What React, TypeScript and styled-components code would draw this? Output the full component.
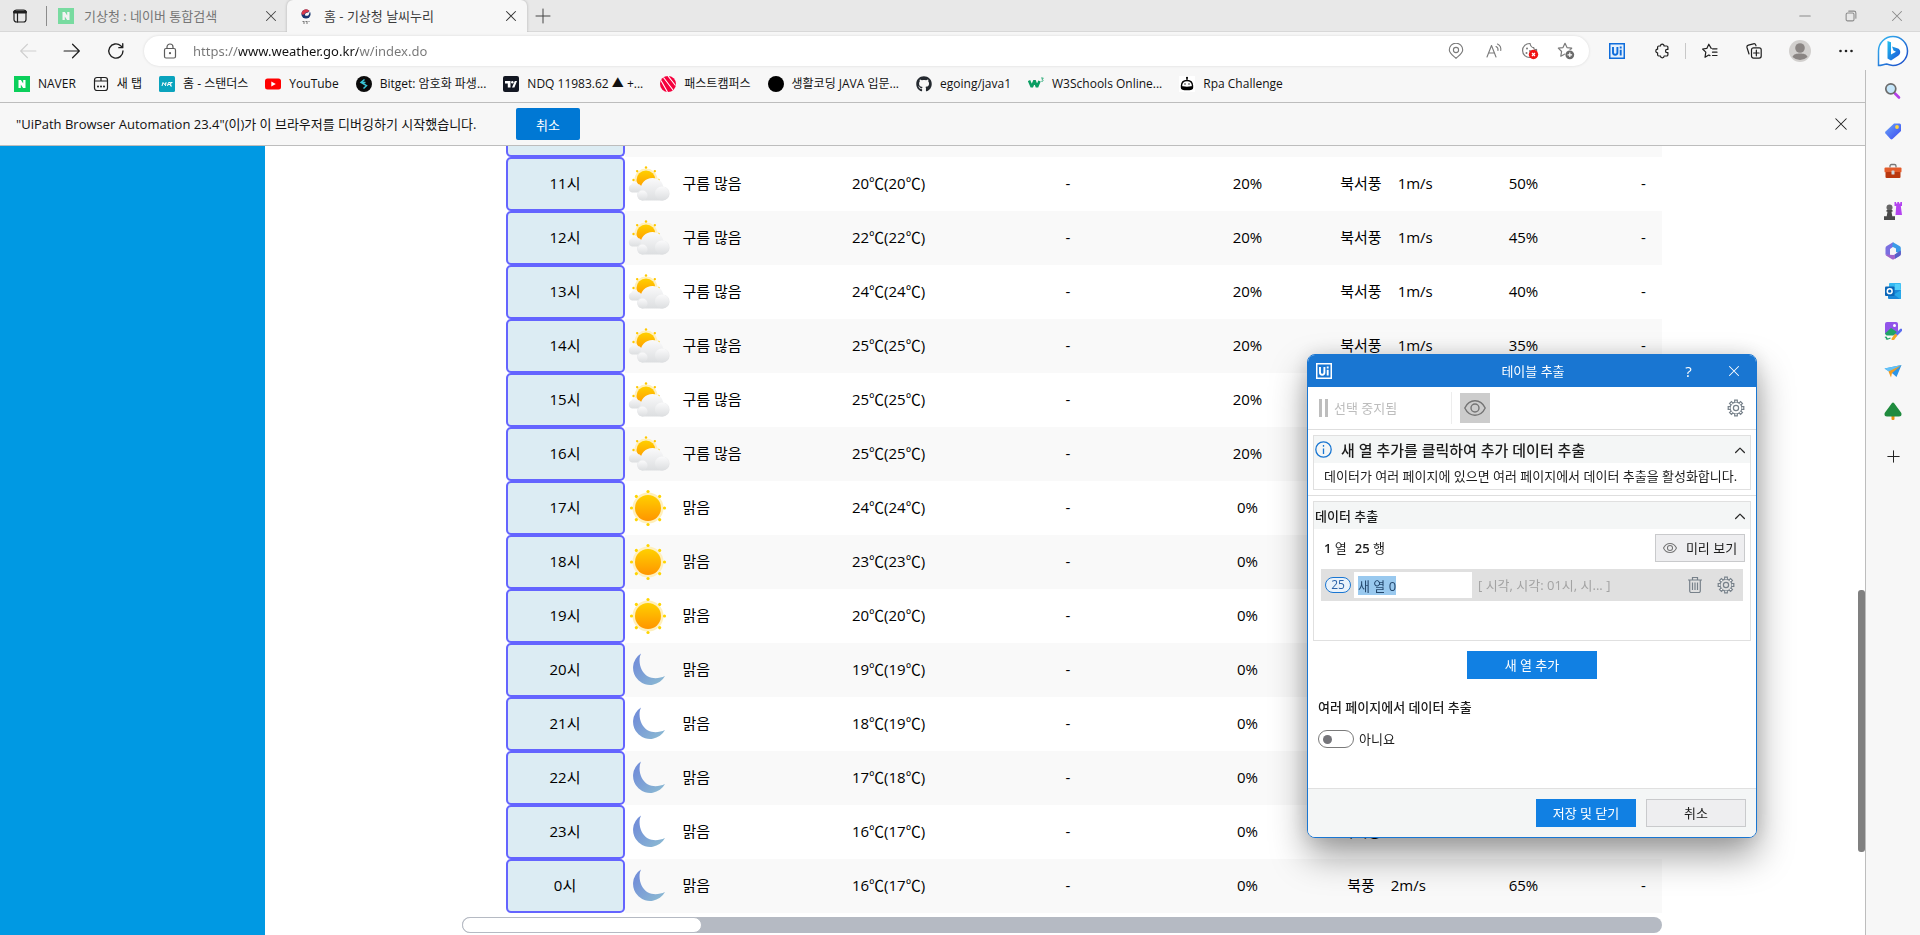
import React, { useEffect, useRef } from "react";
import styled, { createGlobalStyle, css } from "styled-components";
import { FaGithub } from "react-icons/fa";

const UI_FONT = '"Open Sans", "Noto Sans CJK KR", sans-serif';

const GlobalStyle = createGlobalStyle`
  * { box-sizing: border-box; }
  body { margin: 0; font-family: ${UI_FONT}; font-size: 13px; color: #111; background: #fff; }
  button, input { font: inherit; color: inherit; }
  button { border: 0; padding: 0; background: none; display: flex; align-items: center; justify-content: center; }
  a { color: inherit; text-decoration: none; }
  svg { display: block; flex: none; }
`;

/* ---------- window frame ---------- */

const Window = styled.div`
  height: 100vh;
  display: flex;
  flex-direction: column;
  overflow: hidden;
  background: #f7f7f7;
`;

const TabStrip = styled.div`
  display: flex;
  align-items: center;
  height: 32px;
  flex: none;
  background: #e8e8e8;
  border-bottom: 1px solid #d8d8d8;
`;

const StripButton = styled.button<{ $w: number }>`
  width: ${(p) => p.$w}px;
  height: 31px;
`;

const Tab = styled.div<{ $active?: boolean }>`
  display: flex;
  align-items: center;
  width: 240px;
  height: 32px;
  padding: 0 10px 0 11px;
  gap: 10px;
  color: #767676;
  ${(p) =>
    p.$active &&
    css`
      color: #3b3b3b;
      background: #f7f7f7;
      border-radius: 6px 6px 0 0;
      margin-bottom: -1px;
      box-shadow: 0 0 3px rgba(0, 0, 0, 0.25);
      clip-path: inset(-4px -4px 0 -4px);
    `}
`;

const TabTitle = styled.span`
  flex: 1;
  white-space: nowrap;
  line-height: 20px;
`;

const StripDivider = styled.span`
  width: 1px;
  height: 20px;
  background: #8c8c8c;
  margin-left: 7px;
`;

const WindowControls = styled.div`
  display: flex;
  margin-left: auto;
`;

const Toolbar = styled.div`
  display: flex;
  align-items: center;
  height: 38px;
  flex: none;
`;

const ToolButton = styled.button<{ $w: number }>`
  width: ${(p) => p.$w}px;
  height: 30px;
  flex: none;
`;

const NavGroup = styled.div`
  display: flex;
  padding: 0 6px;
`;

const AddressBar = styled.div`
  flex: 1;
  display: flex;
  align-items: center;
  height: 30px;
  border-radius: 15px;
  background: #fff;
  box-shadow: 0 0 3px rgba(0, 0, 0, 0.12);
  padding: 0 5px 0 18px;
`;

const UrlInput = styled.input`
  flex: 1;
  min-width: 0;
  margin-left: 15px;
  padding: 0;
  border: 0;
  outline: 0;
  font-family: "Noto Sans", sans-serif;
  line-height: 20px;
  color: #111;
  background: linear-gradient(90deg, #767676 46px, #111 46px, #111 165px, #767676 165px);
  -webkit-background-clip: text;
  background-clip: text;
  -webkit-text-fill-color: transparent;
`;

const ToolDivider = styled.span`
  width: 1px;
  height: 16px;
  margin-left: 6px;
  background: #c8c8c8;
`;

const Body = styled.div`
  flex: 1;
  min-height: 0;
  display: flex;
`;

const Content = styled.div`
  flex: 1;
  min-width: 0;
  display: flex;
  flex-direction: column;
`;

const Bookmarks = styled.nav`
  display: flex;
  align-items: center;
  height: 33px;
  flex: none;
  padding: 0 0 4px 14px;
  gap: 17px;
  border-bottom: 1px solid #bdbdbd;
  font-size: 12px;
`;

const Bookmark = styled.a`
  display: flex;
  align-items: center;
  gap: 8px;
  white-space: nowrap;
  line-height: 20px;
`;

const InfoBar = styled.div`
  display: flex;
  align-items: center;
  height: 43px;
  flex: none;
  padding: 0 12px 0 16px;
  border-bottom: 1px solid #bdbdbd;
`;

const InfoText = styled.span`
  width: 500px;
  white-space: nowrap;
  line-height: 20px;
`;

const InfoAction = styled.button`
  width: 64px;
  height: 32px;
  border-radius: 2px;
  background: #0078d4;
  color: #fff;
`;

const InfoClose = styled.button`
  margin-left: auto;
  width: 24px;
  height: 24px;
`;

const EdgeSidebar = styled.aside`
  width: 55px;
  flex: none;
  display: flex;
  flex-direction: column;
  align-items: center;
  padding-top: 1px;
  border-left: 1px solid #bdbdbd;
`;

const SideButton = styled.button<{ $last?: boolean }>`
  width: 40px;
  height: ${(p) => (p.$last ? 50 : 40)}px;
`;

/* ---------- weather page ---------- */

const Page = styled.main`
  flex: 1;
  min-height: 0;
  display: flex;
  background: #fff;
  overflow: hidden;
`;

const BlueRail = styled.div`
  width: 265px;
  flex: none;
  background: #0099e3;
`;

const Forecast = styled.section`
  flex: 1;
  min-width: 0;
  display: flex;
  flex-direction: column;
  align-items: center;
`;

const ForecastInner = styled.div`
  width: 100%;
  max-width: 1200px;
`;

const TableWrap = styled.div`
  padding-left: 44px;
  margin-bottom: 4px;
`;

const Table = styled.table`
  width: 100%;
  table-layout: fixed;
  border-collapse: separate;
  border-spacing: 0;
  font-size: 15px;
  line-height: 24px;
  color: #000;
`;

const Row = styled.tr<{ $shade?: boolean }>`
  background: ${(p) => (p.$shade ? "#f9f9f9" : "#fff")};
`;

const HourCell = styled.th`
  height: 54px;
  padding: 0 0 3px;
  font-weight: 400;
  border: 2px solid #6464ff;
  border-radius: 5px;
  background: #dcecf3;
`;

/* lower edge of the row that is scrolled away above */
const PeekHourCell = styled.td`
  height: 11px;
  padding: 0;
  border: 2px solid #6464ff;
  border-top: 0;
  border-radius: 0 0 5px 5px;
  background: #dcecf3;
`;

const Cell = styled.td`
  padding: 0 0 2px;
  text-align: center;
  white-space: nowrap;
`;

const LastCell = styled(Cell)`
  padding-left: 14px;
`;

const Sky = styled.div`
  display: flex;
  align-items: center;
  gap: 12px;
  padding-left: 2px;
`;

const Wind = styled.div`
  display: flex;
  justify-content: center;
  gap: 16px;
`;

const HScroll = styled.div`
  height: 16px;
  border-radius: 8px;
  background: #b5bac3;
`;

const HThumb = styled.div`
  width: 20%;
  height: 16px;
  border: 1px solid #b5bac3;
  border-radius: 8px;
  background: #fff;
`;

const VScroll = styled.div`
  width: 7px;
  flex: none;
  padding-top: 444px;
`;

const VThumb = styled.div`
  height: 262px;
  border-radius: 3px;
  background: #808080;
`;

/* ---------- dialog ---------- */

const Dialog = styled.section`
  position: fixed;
  top: 354px;
  right: 163px;
  width: 450px;
  display: flex;
  flex-direction: column;
  border: 1px solid #1976d2;
  border-radius: 8px;
  overflow: hidden;
  background: #fff;
  color: #1c1c1c;
  font-size: 13px;
  line-height: 20px;
  box-shadow: 0 18px 36px rgba(0, 0, 0, 0.38), 0 0 20px rgba(0, 0, 0, 0.12);
`;

const TitleBar = styled.header`
  display: grid;
  grid-template-columns: 1fr auto 1fr;
  align-items: center;
  height: 32px;
  padding: 0 6px 0 8px;
  background: #1976d2;
  color: #fff;
`;

const TitleText = styled.h1`
  margin: 0;
  font-size: 13px;
  font-weight: 400;
`;

const TitleActions = styled.div`
  display: flex;
  justify-content: flex-end;
`;

const TitleButton = styled.button`
  width: 45px;
  height: 32px;
  padding-left: 12px;
  font-size: 15px;
`;

const DialogTools = styled.div`
  display: flex;
  align-items: center;
  height: 43px;
  padding: 0 11px 0 10px;
  border-bottom: 1px solid #dedede;
`;

const PausedButton = styled.button`
  width: 134px;
  height: 32px;
  justify-content: flex-start;
  gap: 6px;
  border-right: 1px solid #ededed;
  color: #bdbdbd;
`;

const EyeToggle = styled.button`
  width: 30px;
  height: 30px;
  margin-left: 8px;
  background: #cccccc;
`;

const PushButton = styled.button`
  margin-left: auto;
`;

const Panel = styled.section`
  margin: 5px;
  border: 1px solid #e0e0e0;
`;

const PanelHead = styled.div<{ $large?: boolean }>`
  display: flex;
  align-items: center;
  height: 27px;
  padding: 0 5px 0 1px;
  gap: 9px;
  background: #f4f6f6;
  font-size: ${(p) => (p.$large ? 15 : 13)}px;
  font-weight: 500;
`;

const PanelNote = styled.p`
  margin: 0;
  padding: 3px 0 3px 10px;
  white-space: nowrap;
`;

const Rule = styled.div`
  height: 1px;
  background: #dedede;
`;

const DataBody = styled.div`
  height: 111px;
  padding: 5px 5px 0 7px;
`;

const CountLine = styled.div`
  display: flex;
  align-items: center;
  height: 28px;
  padding-left: 3px;
  gap: 8px;
`;

const Count = styled.b`
  font-weight: 600;
`;

const PreviewButton = styled.button`
  width: 90px;
  height: 28px;
  margin-left: auto;
  gap: 9px;
  border: 1px solid #c9cacc;
  background: #eeeef0;
`;

const ColumnRow = styled.div`
  display: flex;
  align-items: center;
  height: 32px;
  margin: 7px 2px 0 0;
  padding: 0 8px 0 4px;
  background: #e0e0e0;
`;

const CountPill = styled.span`
  width: 26px;
  height: 16px;
  border: 1px solid #1976d2;
  border-radius: 8px;
  background: #e9f2fb;
  color: #2a62a8;
  font-size: 12px;
  line-height: 14px;
  text-align: center;
`;

const NameInput = styled.input`
  width: 118px;
  height: 26px;
  margin-left: 3px;
  padding: 0 4px;
  border: 0;
  outline: 0;
  background: #fff;
  line-height: 16px;
  &::selection { background: #99c9ef; color: #24486e; }
`;

const Sample = styled.span`
  flex: 1;
  padding-left: 6px;
  color: #a3a3a3;
  white-space: nowrap;
`;

const RowTools = styled.div`
  display: flex;
  gap: 14px;
`;

const PrimaryButton = styled.button<{ $w: number }>`
  width: ${(p) => p.$w}px;
  height: 28px;
  background: #1180e3;
  color: #fff;
`;

const SecondaryButton = styled.button`
  width: 100px;
  height: 28px;
  border: 1px solid #c9cacc;
  background: #eeeef0;
`;

const Centered = styled.div`
  display: flex;
  justify-content: center;
  padding-top: 5px;
`;

const Paging = styled.div`
  padding: 18px 10px 39px;
`;

const PagingTitle = styled.h2`
  margin: 0 0 12px;
  font-size: 13px;
  font-weight: 500;
`;

const SwitchLabel = styled.label`
  display: flex;
  align-items: center;
  gap: 5px;
`;

const Switch = styled.input`
  appearance: none;
  display: flex;
  align-items: center;
  width: 36px;
  height: 18px;
  margin: 0;
  padding: 0 4px;
  border: 1px solid #7a7a7a;
  border-radius: 9px;
  &::before { content: ""; width: 9px; height: 9px; border-radius: 50%; background: #75757a; }
`;

const DialogFoot = styled.footer`
  display: flex;
  justify-content: flex-end;
  gap: 10px;
  padding: 10px;
  border-top: 1px solid #e0e0e0;
  background: #f4f6f6;
`;

/* ---------- icons ---------- */

type IconProps = { size?: number; color?: string; w?: number; children?: React.ReactNode };

const Line = ({ size = 16, color = "#1f1f1f", w = 1.2, children }: IconProps) => (
  <svg width={size} height={size} viewBox="0 0 16 16" fill="none" stroke={color} strokeWidth={w} strokeLinecap="round" strokeLinejoin="round" aria-hidden="true">
    {children}
  </svg>
);

const CloseIcon = (p: IconProps) => <Line {...p}><path d="M2 2l12 12M14 2L2 14" /></Line>;
const PlusIcon = (p: IconProps) => <Line {...p}><path d="M8 1v14M1 8h14" /></Line>;
const ChevronUp = () => <Line size={10} w={2} color="#2b2b2b"><path d="M1 12l7-7 7 7" /></Line>;

const WorkspaceIcon = () => (
  <Line><rect x="2" y="2" width="12" height="12" rx="2.5" /><path d="M2.5 4h11" strokeWidth="3" /><path d="M5.5 5v9" /></Line>
);
const NaverIcon = ({ faded }: { faded?: boolean }) => (
  <svg width="16" height="16" viewBox="0 0 16 16" opacity={faded ? 0.5 : 1} aria-hidden="true">
    <rect width="16" height="16" fill="#0bcf5b" />
    <path d="M4.5 4h2.4l2.3 3.5V4h2.3v8H9.1L6.8 8.5V12H4.5z" fill="#fff" />
  </svg>
);
const KmaIcon = () => (
  <svg width="16" height="16" viewBox="0 0 16 16" aria-hidden="true">
    <circle cx="8" cy="6" r="4.600" fill="#17356f" />
    <path d="M3.500 5A4.600 4.600 0 0 1 11.500 3c-1 .5-1.500 1.500-3 1.500S6.500 7 5 6.800 3.500 5 3.500 5z" fill="#d8384a" />
    <path d="M12.800 2.500c-1.800.2-1.600 2-3.300 2.200S6.800 5.800 7 7.200c1 1 3.500.8 4-1 .3-1.400 1-2.300 1.800-3.700z" fill="#f7f7f7" />
    <path d="M4.500 13.500h7M5 15h6" stroke="#777" strokeWidth="1" strokeDasharray="2 1" />
  </svg>
);
const MinimizeIcon = () => <Line size={12} color="#8a8a8a" w={1.4}><path d="M1 8h14" /></Line>;
const RestoreIcon = () => (
  <Line size={12} color="#8a8a8a" w={1.4}><rect x="1.500" y="4" width="10.500" height="10.500" rx="2" /><path d="M5 1.500h7a2.500 2.500 0 0 1 2.500 2.500v7" /></Line>
);
const BackIcon = () => <Line size={18} color="#cfcfcf" w={1}><path d="M15 8H1.500M7.500 2l-6 6 6 6" /></Line>;
const ForwardIcon = () => <Line size={18} w={1.100}><path d="M1 8h13.500M8.500 2l6 6-6 6" /></Line>;
const ReloadIcon = () => <Line size={18}><path d="M14.200 8a6.300 6.300 0 1 1-2-4.600L14 5M14 1.500V5h-3.500" /></Line>;
const LockIcon = () => (
  <Line color="#5c5c5c"><rect x="2.500" y="5.500" width="11" height="9.500" rx="1.500" /><path d="M5 5.500V4a3 3 0 0 1 6 0v1.500" /><circle cx="8" cy="10.200" r=".5" fill="#5c5c5c" /></Line>
);
const PinIcon = () => (
  <Line color="#7a7a7a" w={1.100}><path d="M8 15.400C5 12.600 1.300 10 1.300 6.900a6.700 6.700 0 0 1 13.400 0c0 3.100-3.700 5.700-6.700 8.500z" /><circle cx="8" cy="7" r="2.600" /></Line>
);
const ReadAloudIcon = () => (
  <Line color="#7a7a7a" w={1.100}><path d="M1 14L5.500 2.500 10 14M2.600 10h5.800M10 3.500c1.600.8 2.200 2.500 2 4M11.500 1c2.600 1.200 3.600 3.900 3.300 6.500" /></Line>
);
const CookieIcon = () => (
  <svg width="18" height="18" viewBox="0 0 18 18" fill="none" aria-hidden="true">
    <path d="M9 1.500A7 7 0 1 0 15.500 7.500c-1.500.4-2.700-.3-2.800-1.800C10.500 5.500 9.500 4 9 1.500z" stroke="#7a7a7a" strokeWidth="1.200" />
    <g fill="#7a7a7a"><circle cx="6" cy="6.500" r="1" /><circle cx="5.500" cy="11" r="1" /><circle cx="9" cy="9" r="1" /></g>
    <circle cx="12.500" cy="12.500" r="4.700" fill="#f01414" />
    <path d="M11 11l3 3M14 11l-3 3" stroke="#fff" strokeWidth="1.200" />
  </svg>
);
const STAR = "M8 1.300l2 4.300 4.700.6-3.400 3.300.8 4.700L8 12l-4.200 2.200.8-4.700L1.300 6.200 6 5.600z";
const StarAddIcon = () => (
  <svg width="18" height="18" viewBox="0 0 18 18" fill="none" aria-hidden="true">
    <path d={STAR} stroke="#7a7a7a" strokeWidth="1.200" strokeLinejoin="round" />
    <circle cx="12.800" cy="12.800" r="5" fill="#fff" /><circle cx="12.800" cy="12.800" r="4.400" fill="#6b6b6b" />
    <path d="M12.800 10.500v4.600M10.500 12.800h4.600" stroke="#fff" strokeWidth="1.200" />
  </svg>
);
const UiLogo = ({ light }: { light?: boolean }) => (
  <svg width="16" height="16" viewBox="0 0 16 16" fill="none" aria-hidden="true">
    <rect x=".75" y=".75" width="14.500" height="14.500" fill={light ? "#1976d2" : "#e3effc"} stroke={light ? "#fff" : "#0f6ddb"} strokeWidth="1.500" />
    <path d="M4 4v5.500a2.200 2.200 0 0 0 4.400 0V4M11.700 6.800v5.700M11.700 3.500v2" stroke={light ? "#fff" : "#0f6ddb"} strokeWidth="1.900" />
  </svg>
);
const PuzzleIcon = () => (
  <Line><path d="M4.800 3h1.700a1.800 1.800 0 0 1 3.600 0h2.600a1.200 1.200 0 0 1 1.200 1.200v2.200h-.8a1.600 1.600 0 0 0 0 3.200h.8v2.200a1.200 1.200 0 0 1-1.200 1.200h-2.600a1.800 1.800 0 0 1-3.600 0H4.800a1.200 1.200 0 0 1-1.200-1.200V9.800a1.800 1.800 0 0 1 0-3.600v-2A1.200 1.200 0 0 1 4.800 3z" /></Line>
);
const FavoritesIcon = () => (
  <Line><path d="M10.500 5.800H15M10.500 9.200H15M10.500 12.500H15" /><path d="M9.200 5.400L6.800 1.200l-2 4.200-4.200.6 3.200 3.100-.8 5.200 3.800-2.300 1.200.6" /></Line>
);
const CollectionsIcon = () => (
  <Line><rect x="5.500" y="4.800" width="9.700" height="10.300" rx="2" /><path d="M10.350 7.200v5.600M7.600 10h5.500" /><path d="M3 11L1 4.500a2 2 0 0 1 1.400-2.400l5-1.300a2 2 0 0 1 2.400 1.300l.2.700" /></Line>
);
const Avatar = () => (
  <svg width="22" height="22" viewBox="0 0 22 22" aria-hidden="true">
    <circle cx="11" cy="11" r="11" fill="#d2d0ce" /><circle cx="11" cy="8" r="4.800" fill="#8a8583" />
    <path d="M3.500 17c1-3 4-3.500 7.500-3.500s6.500.5 7.500 3.500a11 11 0 0 1-15 0z" fill="#8a8583" />
  </svg>
);
const DotsIcon = () => (
  <svg width="16" height="16" viewBox="0 0 16 16" fill="#222" aria-hidden="true"><circle cx="2.500" cy="8" r="1.300" /><circle cx="8" cy="8" r="1.300" /><circle cx="13.500" cy="8" r="1.300" /></svg>
);
const BingIcon = () => (
  <svg width="32" height="32" viewBox="0 0 32 32" aria-hidden="true">
    <defs>
      <linearGradient id="bingRing" x1="0" y1="0" x2="1" y2="1"><stop offset="0" stopColor="#35b9f2" /><stop offset="1" stopColor="#1b48c7" /></linearGradient>
      <linearGradient id="bingB" x1="0" y1="0" x2="1" y2="1"><stop offset="0" stopColor="#22c3ee" /><stop offset="1" stopColor="#1d50d8" /></linearGradient>
    </defs>
    <path d="M1.500 30.500V16A14.500 14.500 0 1 1 16 30.500c-2.500 0-4.600-.8-6.500-1.500-2.500.2-5 1.500-8 1.500z" fill="#fff" stroke="url(#bingRing)" strokeWidth="1.500" />
    <path d="M10.500 6l3.500 1.300v12.200l5-2.800-2.500-1.300-1.500-3.900 6 2.100c1.400.6 2.200 1.900 2.200 3.500 0 1.700-.8 2.900-2 3.600L14 25.500l-3.500-2z" fill="url(#bingB)" />
  </svg>
);

const NewTabIcon = () => (
  <Line><rect x="1.500" y="1.500" width="13" height="13" rx="2.500" /><path d="M2 5h12M8 2v2.500" /><path d="M5 10.500h.01M8 10.500h.01M11 10.500h.01" strokeWidth="2" /></Line>
);
const StandersIcon = () => (
  <svg width="16" height="16" viewBox="0 0 16 16" aria-hidden="true"><rect width="16" height="16" rx="1.500" fill="#0aa3bd" /><path d="M3 10l1-3.500 1.500 2L7 6.500 6.500 10M8.500 10l1-3.500h2l-.5 2h-2M13.500 6.500h-1.500L11.500 10h1.500" stroke="#fff" strokeWidth="1" fill="none" /></svg>
);
const YouTubeIcon = () => (
  <svg width="16" height="16" viewBox="0 0 16 16" aria-hidden="true"><rect y="2.500" width="16" height="11" rx="2.500" fill="#f00" /><path d="M6.300 5.500v5L10.800 8z" fill="#fff" /></svg>
);
const BitgetIcon = () => (
  <svg width="16" height="16" viewBox="0 0 16 16" aria-hidden="true"><circle cx="8" cy="8" r="8" fill="#0b0b0b" /><path d="M8.500 3.500L5 6.500l5.500 3.200L7.500 12.500M5.500 6.500h4" stroke="#39c5d6" strokeWidth="1.500" fill="none" /></svg>
);
const TradingViewIcon = () => (
  <svg width="16" height="16" viewBox="0 0 16 16" aria-hidden="true"><rect width="16" height="16" rx="2" fill="#131722" /><path d="M2 5h5.500v6.500H4.800V7.500H2zM11.800 5H14l-2.600 6.500H9z" fill="#fff" /><circle cx="9.300" cy="6.200" r="1.200" fill="#fff" /></svg>
);
const FastCampusIcon = () => (
  <svg width="16" height="16" viewBox="0 0 16 16" aria-hidden="true"><circle cx="8" cy="8" r="8" fill="#f5003d" /><path d="M1 4.500L7.500 16M3.500 1.500L13 14M8 0l7.500 9.500" stroke="#fff" strokeWidth="1.100" /></svg>
);
const BlackDot = () => <svg width="16" height="16" viewBox="0 0 16 16" aria-hidden="true"><circle cx="8" cy="8" r="8" /></svg>;
const W3Icon = () => (
  <svg width="16" height="16" viewBox="0 0 16 16" fill="none" stroke="#0a9e63" aria-hidden="true"><path d="M1 4.500l2.800 6.500 2.700-6.500L9 11l2.500-6" strokeWidth="2.600" strokeLinejoin="bevel" /><path d="M13 2h2.300l-1.200 1.500c1.600.2 1.300 2.300-.8 1.800" strokeWidth=".8" /></svg>
);
const RobotIcon = () => (
  <svg width="16" height="16" viewBox="0 0 16 16" fill="none" stroke="#000" aria-hidden="true">
    <rect width="16" height="16" fill="#fff" stroke="none" /><path d="M8 1.500V4M2.500 10c0-3.500 2-5.500 5.500-5.500s5.500 2 5.500 5.500" strokeWidth="1.300" /><path d="M1.800 9.500c1 1.500 11.400 1.500 12.400 0v2c0 1.800-1.700 2.700-3.700 2.700h-5c-2 0-3.700-.9-3.700-2.700z" fill="#000" stroke="none" /><circle cx="8" cy="1.800" r="1" fill="#000" stroke="none" /><circle cx="6" cy="8" r=".7" fill="#000" stroke="none" /><circle cx="10" cy="8" r=".7" fill="#000" stroke="none" />
  </svg>
);

const Side = ({ children }: { children: React.ReactNode }) => (
  <svg width="18" height="18" viewBox="0 0 18 18" aria-hidden="true">{children}</svg>
);
const SearchSide = () => (
  <Side><path d="M11 11.500l4 4" stroke="#b33fe8" strokeWidth="2.600" strokeLinecap="round" /><circle cx="6.800" cy="6.800" r="5" fill="#c5e6fa" stroke="#6c6c6c" strokeWidth="1.700" /></Side>
);
const TagSide = () => (
  <Side>
    <defs><linearGradient id="tagG" x1="0" y1="0" x2="1" y2="1"><stop offset="0" stopColor="#6aa5f8" /><stop offset="1" stopColor="#3b48f0" /></linearGradient></defs>
    <path d="M10 1.500h5.500a1.500 1.500 0 0 1 1.500 1.500v6L8.500 17a1.500 1.500 0 0 1-2 0L1.500 11.500a1.500 1.500 0 0 1 0-2z" fill="url(#tagG)" /><circle cx="13" cy="5" r="1.900" fill="#ffd43d" />
  </Side>
);
const ToolboxSide = () => (
  <Side>
    <path d="M6 5.500V4a1.500 1.500 0 0 1 1.500-1.500h3A1.500 1.500 0 0 1 12 4v1.500" fill="none" stroke="#777" strokeWidth="1.300" />
    <rect x=".5" y="5.500" width="17" height="5" rx="1" fill="#e35b2a" /><rect x="1.500" y="10" width="15" height="6" rx="1" fill="#b9380f" /><rect x="7.500" y="8.500" width="3" height="4" rx=".6" fill="#cfd6dc" />
  </Side>
);
const GamesSide = () => (
  <Side>
    <path d="M10.500 0h1.600v1.500h1.200V0h1.800v1.500h1.200V0H18v4h-1.200l1.200 9h-6.500l.7-9h-1.700z" fill="#b443f0" />
    <circle cx="5.500" cy="5.500" r="3" fill="#666" /><path d="M2.500 8h6v1.800H7.500l.8 4.400H11V18H0v-3.800h2.700l.8-4.400h-1z" fill="#4a4a4a" />
  </Side>
);
const OfficeSide = () => (
  <Side>
    <path d="M9 .3l-6.200 3.600A2.500 2.500 0 0 0 1.500 6v6.500l4.500 1.200V7l5-3.500z" fill="#7b6fe0" />
    <path d="M9 .3l6.500 3.600A2.500 2.500 0 0 1 16.800 6v6L12 10V6.500L8 4.500z" fill="#3b9be8" />
    <path d="M1.500 12.500c.2.800.7 1.200 1.300 1.600L8 17.300a2.300 2.300 0 0 0 2 0l5.500-3.200a2.500 2.500 0 0 0 1.300-2.100l-.3-2L9.500 13z" fill="#a066cc" />
    <path d="M16.800 8.500L11 12.300v4.400l4.500-2.600a2.500 2.500 0 0 0 1.300-2.100z" fill="#5561c8" />
    <path d="M9 5.800l3 1.700v3.300l-3 1.800-3-1.800V7.500z" fill="#f7f7f7" />
  </Side>
);
const OutlookSide = () => (
  <Side>
    <rect x="5" y="1" width="12" height="7" rx="1" fill="#35b8f1" /><rect x="11" y="2" width="5.500" height="6" fill="#54d0fb" /><path d="M4 8h13v8a1 1 0 0 1-1 1H5a1 1 0 0 1-1-1z" fill="#1a87d8" /><path d="M17 8l-7 4.500L16 17a1 1 0 0 0 1-1z" fill="#28a8ea" />
    <rect x="1" y="4.500" width="9.500" height="9.500" rx="1" fill="#0a66b8" /><circle cx="5.700" cy="9.200" r="2.400" fill="none" stroke="#fff" strokeWidth="1.500" />
  </Side>
);
const DesignerSide = () => (
  <Side>
    <rect x="1" y="0" width="13" height="13" rx="2" fill="#9254ea" /><circle cx="10.500" cy="3.500" r="1.500" fill="#fff" /><path d="M1 11.500l6-5.500 6 4-3.500 3.500H2.500z" fill="#21a366" />
    <path d="M17 8l-5.500 5.500" stroke="#5b6cf0" strokeWidth="2.600" strokeLinecap="round" /><path d="M11.500 13.500L9 17" stroke="#f5a623" strokeWidth="3" strokeLinecap="round" /><path d="M1 15.500c1-1 2 0 1.500 1s1.500.5 4-.500" stroke="#21a366" strokeWidth="1.300" fill="none" />
  </Side>
);
const PlaneSide = () => (
  <Side><path d="M.5 6.500L17.500 3l-5 12-3.700-3.200z" fill="#2b95e8" /><path d="M.5 6.500L17.500 3 5.500 10z" fill="#62c2f7" /><path d="M4.500 9.500L17 3.500l-9 7.500L7 15.500z" fill="#f39c1f" /></Side>
);
const TreeSide = () => (
  <Side><rect x="7.500" y="13" width="3" height="5" rx="1" fill="#e8920c" /><path d="M9 .5c.4 0 .8.300 1 .600L17 10.500c1.200 2 .2 4-2 4H3c-2.200 0-3.200-2-2-4L8 1.100c.2-.3.6-.6 1-.6z" fill="#1f8b3e" /></Side>
);

const EyeIcon = ({ size = 22, w = 1.4 }: { size?: number; w?: number }) => (
  <svg width={size} height={size} viewBox="0 0 22 22" fill="none" stroke="#747474" strokeWidth={w} aria-hidden="true"><path d="M.8 11c4.600-9.600 15.800-9.600 20.400 0-4.600 9.600-15.800 9.600-20.400 0z" /><circle cx="11" cy="11" r="4" /></svg>
);
const GEAR = Array.from({ length: 8 }, (_, i) => i * 45);
const GearIcon = () => (
  <svg width="18" height="18" viewBox="0 0 18 18" fill="none" stroke="#77818a" strokeWidth="1.200" aria-hidden="true">
    <circle cx="9" cy="9" r="5.900" /><circle cx="9" cy="9" r="2.600" />
    {GEAR.map((a) => <path key={a} d="M7.700 3.200V1.200h2.600v2" fill="#fff" transform={`rotate(${a} 9 9)`} />)}
  </svg>
);
const TrashIcon = () => (
  <svg width="16" height="18" viewBox="0 0 16 18" fill="none" stroke="#77818a" strokeWidth="1.200" aria-hidden="true"><path d="M1 4h14M5.500 4V1.500h5V4M2.700 4v11a1.500 1.500 0 0 0 1.500 1.500h7.600a1.500 1.500 0 0 0 1.500-1.500V4M5.500 6.500V14M8 6.500V14M10.500 6.500V14" /></svg>
);
const PauseIcon = () => <svg width="10" height="18" viewBox="0 0 10 18" fill="#bdbdbd" aria-hidden="true"><rect x="1" width="3" height="18" /><rect x="7" width="3" height="18" /></svg>;
const InfoIcon = () => (
  <svg width="17" height="17" viewBox="0 0 17 17" fill="none" stroke="#1976d2" aria-hidden="true"><circle cx="8.500" cy="8.500" r="7.700" strokeWidth="1.300" /><path d="M8.500 7.500V13M8.500 4v1.700" strokeWidth="1.300" /></svg>
);

const HiddenDefs = styled.svg`
  position: absolute;
`;

const SkyGradients = () => (
  <HiddenDefs width="0" height="0" aria-hidden="true">
    <defs>
      <linearGradient id="sunG" x1="0" y1="0" x2="0" y2="1"><stop offset="0" stopColor="#ffd000" /><stop offset="1" stopColor="#ff9500" /></linearGradient>
      <linearGradient id="cloudG" x1="0" y1="0" x2="0" y2="1"><stop offset="0" stopColor="#fafafb" /><stop offset="1" stopColor="#dcdee0" /></linearGradient>
      <linearGradient id="moonG" x1="0" y1="0" x2="1" y2="1"><stop offset="0.200" stopColor="#7390d8" /><stop offset="1" stopColor="#8dbdd2" /></linearGradient>
    </defs>
  </HiddenDefs>
);

const RAYS = Array.from({ length: 8 }, (_, i) => i * 45);

const SunIcon = () => (
  <svg width="44" height="44" viewBox="0 0 44 44" aria-hidden="true">
    <circle cx="21" cy="23" r="15.500" fill="#fff0bd" /><circle cx="21" cy="23" r="13" fill="url(#sunG)" />
    {RAYS.map((a) => <circle key={a} cx="21" cy="6.500" r="1.600" fill="#ffd500" transform={`rotate(${a} 21 23)`} />)}
  </svg>
);
const MoonIcon = () => (
  <svg width="44" height="44" viewBox="0 0 44 44" aria-hidden="true">
    <path d="M14 6.500C10.500 14 13.500 25 21 29.500c5 2.500 11.500 2 17-.5A17 17 0 1 1 14 6.500z" fill="url(#moonG)" />
  </svg>
);
const CloudyIcon = () => (
  <svg width="44" height="44" viewBox="0 0 44 44" aria-hidden="true">
    <circle cx="19" cy="19" r="11.500" fill="#fff0bd" /><circle cx="19" cy="19" r="9.500" fill="url(#sunG)" />
    {RAYS.map((a) => <circle key={a} cx="19" cy="6.500" r="1.200" fill="#ffc800" transform={`rotate(${a} 19 19)`} />)}
    <path d="M5 31.500a4.200 4.200 0 0 1-.5-8c1-3.500 5.500-3.500 6.500-.5 5 .5 5 8.500 0 8.500z" fill="url(#cloudG)" />
    <path d="M15.500 39.500a5.500 5.500 0 0 1-2-10.500c0-7 5-12 12-12 6 0 10 3.500 10.700 8.500a7 7 0 0 1-1.200 14z" fill="url(#cloudG)" />
    <circle cx="15.500" cy="34.500" r="5" fill="url(#cloudG)" /><circle cx="35" cy="32.500" r="7" fill="url(#cloudG)" />
  </svg>
);

/* ---------- data ---------- */

type SkyKind = "구름 많음" | "맑음";
type Hour = { h: number; sky: SkyKind; t: string; rain: string; dir: string; speed: string; hum: string };

const hour = (h: number, sky: SkyKind, a: number, b: number, rain: string, hum: string, dir = "북서풍", speed = "1m/s"): Hour => ({
  h, sky, t: `${a}℃(${b}℃)`, rain, dir, speed, hum,
});

const HOURS: Hour[] = [
  hour(11, "구름 많음", 20, 20, "20%", "50%"),
  hour(12, "구름 많음", 22, 22, "20%", "45%"),
  hour(13, "구름 많음", 24, 24, "20%", "40%"),
  hour(14, "구름 많음", 25, 25, "20%", "35%"),
  hour(15, "구름 많음", 25, 25, "20%", "35%"),
  hour(16, "구름 많음", 25, 25, "20%", "35%"),
  hour(17, "맑음", 24, 24, "0%", "40%"),
  hour(18, "맑음", 23, 23, "0%", "40%"),
  hour(19, "맑음", 20, 20, "0%", "50%"),
  hour(20, "맑음", 19, 19, "0%", "55%"),
  hour(21, "맑음", 18, 19, "0%", "55%"),
  hour(22, "맑음", 17, 18, "0%", "60%"),
  hour(23, "맑음", 16, 17, "0%", "60%"),
  hour(0, "맑음", 16, 17, "0%", "65%", "북풍", "2m/s"),
];

const skyIcon = (row: Hour) => {
  if (row.sky === "구름 많음") return <CloudyIcon />;
  return row.h >= 20 || row.h === 0 ? <MoonIcon /> : <SunIcon />;
};

const BOOKMARKS: [string, React.ReactNode][] = [
  ["NAVER", <NaverIcon />],
  ["새 탭", <NewTabIcon />],
  ["홈 - 스탠더스", <StandersIcon />],
  ["YouTube", <YouTubeIcon />],
  ["Bitget: 암호화 파생...", <BitgetIcon />],
  ["NDQ 11983.62 ▲ +...", <TradingViewIcon />],
  ["패스트캠퍼스", <FastCampusIcon />],
  ["생활코딩 JAVA 입문...", <BlackDot />],
  ["egoing/java1", <FaGithub size={16} color="#24292f" />],
  ["W3Schools Online...", <W3Icon />],
  ["Rpa Challenge", <RobotIcon />],
];

const SIDE: [string, React.ReactNode][] = [
  ["검색", <SearchSide />],
  ["쇼핑", <TagSide />],
  ["도구", <ToolboxSide />],
  ["게임", <GamesSide />],
  ["Microsoft 365", <OfficeSide />],
  ["Outlook", <OutlookSide />],
  ["Designer", <DesignerSide />],
  ["Drop", <PlaneSide />],
  ["E-tree", <TreeSide />],
];

/* ---------- views ---------- */

const WeatherTable = () => (
  <Table>
    <colgroup>
      <col width="119" /><col width="174" /><col width="180" /><col width="179" />
      <col width="180" /><col width="98" /><col width="176" /><col width="50" />
    </colgroup>
    <tbody>
      <Row $shade>
        <PeekHourCell />
        <td colSpan={7} />
      </Row>
      {HOURS.map((r, i) => (
        <Row key={r.h} $shade={i % 2 === 1}>
          <HourCell scope="row">{r.h}시</HourCell>
          <Cell><Sky>{skyIcon(r)}{r.sky}</Sky></Cell>
          <Cell>{r.t}</Cell>
          <Cell>-</Cell>
          <Cell>{r.rain}</Cell>
          <Cell><Wind><span>{r.dir}</span><span>{r.speed}</span></Wind></Cell>
          <Cell>{r.hum}</Cell>
          <LastCell>-</LastCell>
        </Row>
      ))}
    </tbody>
  </Table>
);

const ExtractDialog = () => {
  const nameRef = useRef<HTMLInputElement>(null);
  useEffect(() => {
    nameRef.current?.focus();
    nameRef.current?.select();
  }, []);
  return (
    <Dialog role="dialog" aria-labelledby="dlg-title">
      <TitleBar>
        <UiLogo light />
        <TitleText id="dlg-title">테이블 추출</TitleText>
        <TitleActions>
          <TitleButton aria-label="도움말">?</TitleButton>
          <TitleButton aria-label="닫기"><CloseIcon size={12} color="#fff" w={1.4} /></TitleButton>
        </TitleActions>
      </TitleBar>
      <DialogTools>
        <PausedButton disabled><PauseIcon />선택 중지됨</PausedButton>
        <EyeToggle aria-label="강조 표시" aria-pressed="true"><EyeIcon /></EyeToggle>
        <PushButton aria-label="설정"><GearIcon /></PushButton>
      </DialogTools>
      <Panel>
        <PanelHead $large>
          <InfoIcon />
          <span>새 열 추가를 클릭하여 추가 데이터 추출</span>
          <PushButton aria-label="접기"><ChevronUp /></PushButton>
        </PanelHead>
        <PanelNote>데이터가 여러 페이지에 있으면 여러 페이지에서 데이터 추출을 활성화합니다.</PanelNote>
      </Panel>
      <Rule />
      <Panel>
        <PanelHead>
          <span>데이터 추출</span>
          <PushButton aria-label="접기"><ChevronUp /></PushButton>
        </PanelHead>
        <DataBody>
          <CountLine>
            <span><Count>1</Count> 열</span>
            <span><Count>25</Count> 행</span>
            <PreviewButton><EyeIcon size={14} w={1.6} />미리 보기</PreviewButton>
          </CountLine>
          <ColumnRow>
            <CountPill>25</CountPill>
            <NameInput ref={nameRef} defaultValue="새 열 0" aria-label="열 이름" />
            <Sample>[ 시각, 시각: 01시, 시... ]</Sample>
            <RowTools>
              <button aria-label="삭제"><TrashIcon /></button>
              <button aria-label="열 설정"><GearIcon /></button>
            </RowTools>
          </ColumnRow>
        </DataBody>
      </Panel>
      <Centered><PrimaryButton $w={130}>새 열 추가</PrimaryButton></Centered>
      <Paging>
        <PagingTitle>여러 페이지에서 데이터 추출</PagingTitle>
        <SwitchLabel><Switch type="checkbox" role="switch" />아니요</SwitchLabel>
      </Paging>
      <DialogFoot>
        <PrimaryButton $w={100}>저장 및 닫기</PrimaryButton>
        <SecondaryButton>취소</SecondaryButton>
      </DialogFoot>
    </Dialog>
  );
};

export default function App() {
  return (
    <Window>
      <GlobalStyle />
      <SkyGradients />
      <TabStrip>
        <StripButton $w={39} aria-label="작업 영역"><WorkspaceIcon /></StripButton>
        <StripDivider />
        <Tab>
          <NaverIcon faded />
          <TabTitle>기상청 : 네이버 통합검색</TabTitle>
          <button aria-label="탭 닫기"><CloseIcon size={12} color="#444" w={1.4} /></button>
        </Tab>
        <Tab $active>
          <KmaIcon />
          <TabTitle>홈 - 기상청 날씨누리</TabTitle>
          <button aria-label="탭 닫기"><CloseIcon size={12} color="#333" w={1.4} /></button>
        </Tab>
        <StripButton $w={32} aria-label="새 탭"><PlusIcon size={16} color="#444" w={1} /></StripButton>
        <WindowControls>
          <StripButton $w={46} aria-label="최소화"><MinimizeIcon /></StripButton>
          <StripButton $w={46} aria-label="이전 크기로"><RestoreIcon /></StripButton>
          <StripButton $w={46} aria-label="닫기"><CloseIcon size={12} color="#8a8a8a" w={1.4} /></StripButton>
        </WindowControls>
      </TabStrip>

      <Toolbar>
        <NavGroup>
          <ToolButton $w={44} aria-label="뒤로"><BackIcon /></ToolButton>
          <ToolButton $w={44} aria-label="앞으로"><ForwardIcon /></ToolButton>
          <ToolButton $w={44} aria-label="새로 고침"><ReloadIcon /></ToolButton>
        </NavGroup>
        <AddressBar>
          <LockIcon />
          <UrlInput aria-label="주소" defaultValue="https://www.weather.go.kr/w/index.do" />
          <ToolButton $w={40} aria-label="위치"><PinIcon /></ToolButton>
          <ToolButton $w={36} aria-label="소리내어 읽기"><ReadAloudIcon /></ToolButton>
          <ToolButton $w={36} aria-label="쿠키 차단됨"><CookieIcon /></ToolButton>
          <ToolButton $w={36} aria-label="즐겨찾기에 추가"><StarAddIcon /></ToolButton>
        </AddressBar>
        <ToolButton $w={56} aria-label="UiPath"><UiLogo /></ToolButton>
        <ToolButton $w={34} aria-label="확장"><PuzzleIcon /></ToolButton>
        <ToolDivider />
        <ToolButton $w={48} aria-label="즐겨찾기"><FavoritesIcon /></ToolButton>
        <ToolButton $w={40} aria-label="컬렉션"><CollectionsIcon /></ToolButton>
        <ToolButton $w={52} aria-label="프로필"><Avatar /></ToolButton>
        <ToolButton $w={40} aria-label="설정 및 기타"><DotsIcon /></ToolButton>
        <ToolButton $w={54} aria-label="Bing"><BingIcon /></ToolButton>
      </Toolbar>

      <Body>
        <Content>
          <Bookmarks>
            {BOOKMARKS.map(([name, icon]) => (
              <Bookmark key={name} href="#">{icon}{name}</Bookmark>
            ))}
          </Bookmarks>
          <InfoBar>
            <InfoText>"UiPath Browser Automation 23.4"(이)가 이 브라우저를 디버깅하기 시작했습니다.</InfoText>
            <InfoAction>취소</InfoAction>
            <InfoClose aria-label="알림 닫기"><CloseIcon size={14} /></InfoClose>
          </InfoBar>
          <Page>
            <BlueRail />
            <Forecast>
              <ForecastInner>
                <TableWrap><WeatherTable /></TableWrap>
                <HScroll><HThumb /></HScroll>
              </ForecastInner>
            </Forecast>
            <VScroll><VThumb /></VScroll>
          </Page>
        </Content>
        <EdgeSidebar>
          {SIDE.map(([name, icon]) => (
            <SideButton key={name} aria-label={name}>{icon}</SideButton>
          ))}
          <SideButton $last aria-label="사용자 지정"><PlusIcon size={13} w={1.2} /></SideButton>
        </EdgeSidebar>
      </Body>
      <ExtractDialog />
    </Window>
  );
}
